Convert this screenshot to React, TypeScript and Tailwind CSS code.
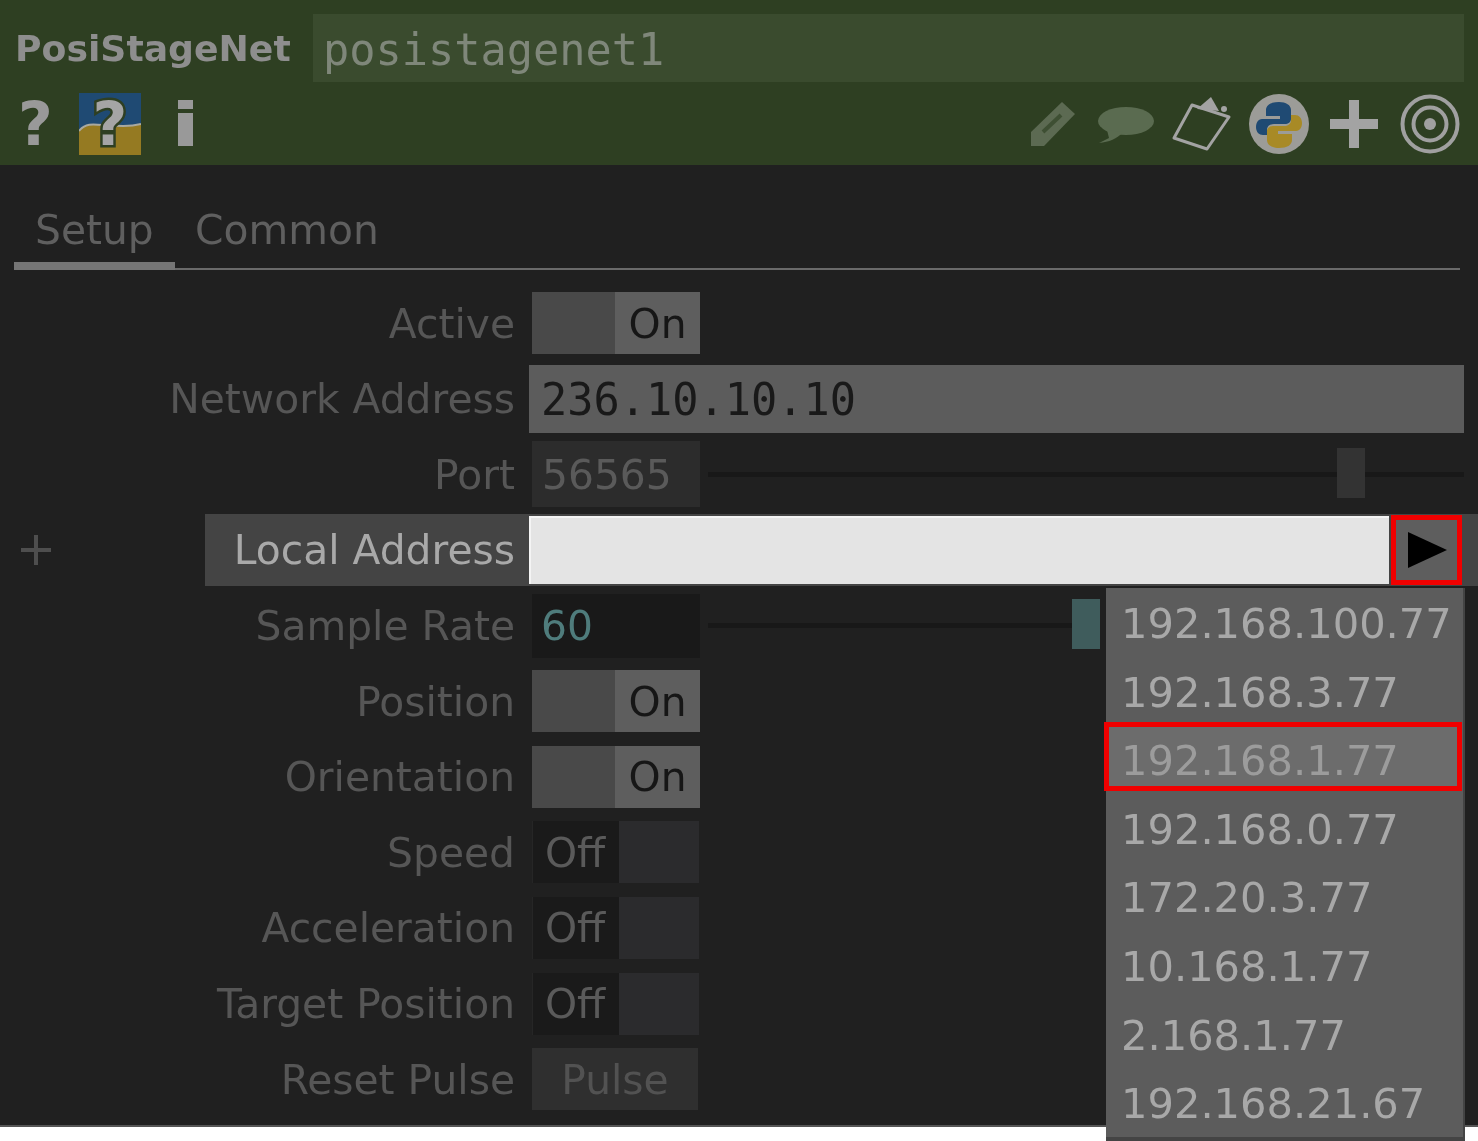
const sans = "font-['DejaVu_Sans',sans-serif]";
const mono = "font-['DejaVu_Sans_Mono',monospace]";
const soft = "blur-[0.6px]";

function Label({ children }: { children: string }) {
  return <div className={`w-[515px] shrink-0 pt-[2px] text-right text-[#565656] ${sans} ${soft}`}>{children}</div>;
}

function OnToggle() {
  return (
    <div className="ml-[17px] flex h-[62px] w-[168px]">
      <div className="w-[83px] bg-[#494949]" />
      <div className="flex flex-1 items-center justify-center bg-[#5e5e5e] pt-[2px] text-[#161616]">
        <span className={soft}>On</span>
      </div>
    </div>
  );
}

function OffToggle() {
  return (
    <div className="ml-[17px] flex h-[62px] w-[168px] border-l border-[#262626]">
      <div className="flex w-[86px] items-center bg-[#1a1a1a] pl-[12px] pt-[2px] text-[#5a5a5a]">
        <span className={soft}>Off</span>
      </div>
      <div className="w-[80px] bg-[#2b2b2d]" />
    </div>
  );
}

function Row({ label, children }: { label: string; children: React.ReactNode }) {
  return (
    <div className="flex h-[75.6px] items-center">
      <Label>{label}</Label>
      {children}
    </div>
  );
}

function Slider({ width, handle, handleClass }: { width: string; handle: string; handleClass: string }) {
  return (
    <div className={`relative ml-[8px] h-[5px] bg-[#181818] ${width}`}>
      <div className={`absolute top-[-24px] h-[50px] w-[28px] ${soft} ${handle} ${handleClass}`} />
    </div>
  );
}

const addresses = [
  "192.168.100.77",
  "192.168.3.77",
  "192.168.1.77",
  "192.168.0.77",
  "172.20.3.77",
  "10.168.1.77",
  "2.168.1.77",
  "192.168.21.67",
];

function Menu() {
  return (
    <div className={`absolute left-[1106px] top-[588px] h-[553px] w-[359px] border-r-2 border-b-4 border-[#444444] bg-[#5c5c5c] pt-[2px] text-[#a8a8a8] ${sans}`}>
      {addresses.map((a, i) => (
        <div key={a} className="relative flex h-[68.6px] items-center pl-[15px] text-[41.6px]">
          {i === 2 && (
            <div className="absolute left-[-2px] top-[-5px] h-[69px] w-[358px] border-[5px] border-[#f00000] bg-[#6c6c6c]" />
          )}
          <span className={`relative ${soft} ${i === 2 ? "text-[#9c9c9c]" : ""}`}>{a}</span>
        </div>
      ))}
    </div>
  );
}

function Header() {
  return (
    <div className="h-[165px] bg-[#2e3f22]">
      <div className="flex h-[93px] items-start pt-[14px] pl-[15px]">
        <div className={`flex h-[68px] w-[298px] shrink-0 items-center pt-[3px] text-[36.2px] font-bold text-[#8e8e8e] ${sans}`}>
          <span className={soft}>PosiStageNet</span>
        </div>
        <div className={`flex h-[68px] w-[1151px] items-center bg-[#3a4b2e] pl-[10px] pt-[5px] text-[43.6px] text-[#7f877a] ${mono}`}>
          <span className={soft}>posistagenet1</span>
        </div>
      </div>
      <div className={`flex h-[62px] items-center pl-[17px] pr-[18px] ${soft} ${sans}`}>
        <div className="flex h-[62px] w-[37px] items-center justify-center text-[60px] font-bold leading-[62px] text-[#999999]">?</div>
        <div className="relative ml-[25px] h-[62px] w-[62px]">
          <svg className="absolute inset-0" width="62" height="62" viewBox="0 0 62 62">
            <rect width="62" height="62" fill="#1f4a73" />
            <path d="M0 38C6 30 14 31 24 32C38 33 50 34 62 31V62H0Z" fill="#957a22" />
            <path d="M0 38C6 30 14 31 24 32C38 33 50 34 62 31" fill="none" stroke="#a9a9a0" strokeWidth="2" />
          </svg>
          <div className="relative flex h-[62px] w-[62px] items-center justify-center text-[60px] font-bold leading-[62px] text-[#a5a5a5] [-webkit-text-stroke:5px_#2e3f22] [paint-order:stroke]">?</div>
        </div>
        <svg className="ml-[35px]" width="18" height="62" viewBox="0 0 18 62">
          <rect x="2" y="7" width="15" height="9" fill="#999" />
          <rect x="2" y="20" width="15" height="33" fill="#999" />
        </svg>
        <div className="flex-1" />
        <svg width="46" height="46" viewBox="0 0 46 46" className="mr-[21px]">
          <path d="M1 45V31L32 1L45 13L14 45Z" fill="#5c6a52" />
          <path d="M13 31L31 14" stroke="#3e4f33" strokeWidth="4" />
        </svg>
        <svg width="58" height="40" viewBox="0 0 58 40" className="mr-[17px]">
          <ellipse cx="29" cy="17" rx="28" ry="14" fill="#5a6b50" />
          <path d="M10 26L12 34L2 39C12 38 20 35 26 28Z" fill="#5a6b50" />
        </svg>
        <svg width="60" height="58" viewBox="0 0 60 58" className="mr-[17px]">
          <path d="M2 43L20 10L57 22L35 54Z" fill="none" stroke="#a3a3a3" strokeWidth="3" strokeLinejoin="round" />
          <path d="M25 14L39 2L47 16Z" fill="#a3a3a3" />
          <circle cx="52" cy="14" r="3" fill="#a3a3a3" />
        </svg>
        <svg width="60" height="60" viewBox="0 0 60 60" className="mr-[21px]">
          <circle cx="30" cy="30" r="30" fill="#9c9c98" />
          <path d="M30 8C22 8 17 11 17 16V22H31V25H13C9 25 7 29 7 33C7 38 10 41 14 41H18V36C18 32 21 30 25 30H36C39 30 42 28 42 25V16C42 11 37 8 30 8Z" fill="#1f4a73" />
          <path d="M30 54C38 54 43 51 43 46V40H29V37H47C51 37 53 33 53 29C53 24 50 21 46 21H42V26C42 30 39 32 35 32H24C21 32 18 34 18 37V46C18 51 23 54 30 54Z" fill="#a88a26" />
        </svg>
        <svg width="48" height="48" viewBox="0 0 48 48" className="mr-[22px]">
          <rect x="19" y="0" width="10" height="48" fill="#a3a3a3" />
          <rect x="0" y="19" width="48" height="10" fill="#a3a3a3" />
        </svg>
        <svg width="60" height="60" viewBox="0 0 60 60">
          <circle cx="30" cy="30" r="27.5" fill="none" stroke="#a0a0a0" strokeWidth="4" />
          <circle cx="30" cy="30" r="16.5" fill="none" stroke="#a0a0a0" strokeWidth="4" />
          <circle cx="30" cy="30" r="6" fill="#a0a0a0" />
        </svg>
      </div>
    </div>
  );
}

export default function App() {
  return (
    <div className="relative h-[1141px] w-[1478px] overflow-hidden bg-white text-[40.8px]">
      <Header />
      <div className="h-[962px] border-b-2 border-[#555555] bg-[#202020]">
        <div className={`relative mx-[14px] flex h-[105px] w-[1446px] items-end border-b-2 border-[#6a6a6a] text-[#5f5f5f] ${sans}`}>
          <div className="absolute bottom-[-2px] left-0 h-[8px] w-[161px] bg-[#757575]" />
          <div className={`flex h-[68px] w-[161px] items-start pl-[21px] ${soft}`}>Setup</div>
          <div className={`flex h-[68px] items-start pl-[20px] ${soft}`}>Common</div>
        </div>
        <div className={`relative pt-[15.5px] ${sans}`}>
          <Row label="Active"><OnToggle /></Row>
          <Row label="Network Address">
            <div className={`ml-[14px] flex h-[68px] w-[935px] items-center bg-[#5c5c5c] pl-[12px] pt-[3px] text-[43.6px] text-[#191919] ${mono}`}>
              <span className={soft}>236.10.10.10</span>
            </div>
          </Row>
          <Row label="Port">
            <div className="ml-[17px] flex h-[66px] w-[168px] items-center bg-[#2c2c2c] pl-[10px] pt-[2px] text-[#5a5a5a]">
              <span className={soft}>56565</span>
            </div>
            <Slider width="w-[756px]" handle="left-[629px]" handleClass="bg-[#333333]" />
          </Row>
          <div className="flex h-[75.6px] items-center">
            <div className="flex h-[72px] w-[205px] shrink-0 items-center pl-[20px]">
              <svg className={soft} width="32" height="32" viewBox="0 0 32 32"><path d="M16 1V31M1 16H31" stroke="#4e4e4e" strokeWidth="4" /></svg>
            </div>
            <div className="flex h-[72px] flex-1 items-center bg-[#444444]">
              <div className={`w-[310px] shrink-0 pt-[2px] text-right text-[#a9a9a9] ${soft}`}>Local Address</div>
              <div className="ml-[14px] h-[68px] w-[860px] border-l-2 border-t-2 border-[#f4f4f4] bg-[#e4e4e4]" />
              <div className="ml-[2px] flex h-[70px] w-[71px] items-center justify-center border-[5px] border-[#f00000] bg-[#5e5e5e]">
                <svg width="40" height="36" viewBox="0 0 40 36"><path d="M1 0L40 18L1 36Z" fill="#000" /></svg>
              </div>
            </div>
          </div>
          <Row label="Sample Rate">
            <div className="ml-[17px] flex h-[64px] w-[168px] items-center bg-[#191919] pl-[9px] pt-[2px] text-[#4f7c7c]">
              <span className={soft}>60</span>
            </div>
            <Slider width="w-[390px]" handle="left-[364px]" handleClass="bg-[#3f5c5c]" />
          </Row>
          <Row label="Position"><OnToggle /></Row>
          <Row label="Orientation"><OnToggle /></Row>
          <Row label="Speed"><OffToggle /></Row>
          <Row label="Acceleration"><OffToggle /></Row>
          <Row label="Target Position"><OffToggle /></Row>
          <Row label="Reset Pulse">
            <div className="ml-[17px] flex h-[62px] w-[166px] items-center justify-center bg-[#2f2f2f] pt-[2px] text-[#525252]">
              <span className={soft}>Pulse</span>
            </div>
          </Row>
        </div>
      </div>
      <Menu />
    </div>
  );
}
